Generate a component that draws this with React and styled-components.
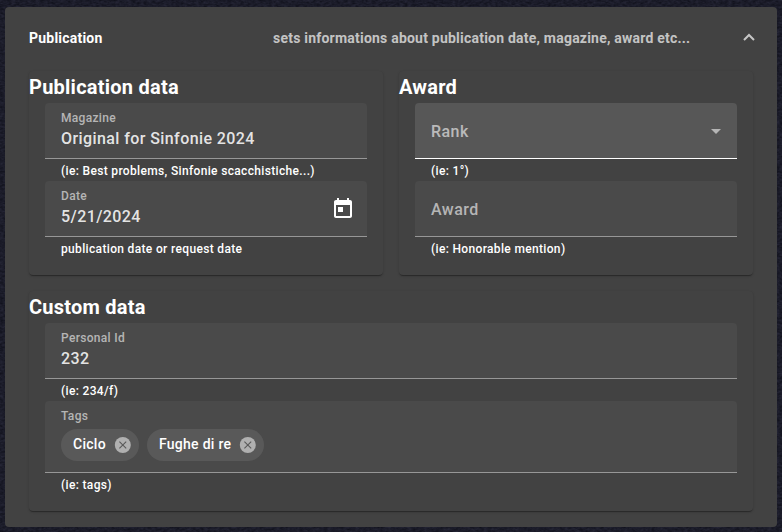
import React from "react";
import styled, { createGlobalStyle } from "styled-components";

const GlobalStyle = createGlobalStyle`
  * { box-sizing: border-box; }
  body {
    margin: 0;
    background: #1b1b29;
    font-family: Roboto, "Liberation Sans", sans-serif;
    font-weight: 500;
    color: #fff;
  }
`;

const Page = styled.main`
  position: relative;
  isolation: isolate;
  height: 532px;
  padding: 7px 5px 5px;
  overflow: hidden;
`;

const Texture = styled.svg`
  position: absolute;
  inset: 0;
  z-index: -1;
  width: 100%;
  height: 100%;
`;

const Panel = styled.section`
  height: 520px;
  padding: 0 24px 16px;
  border-radius: 4px;
  background: #424242;
`;

const PanelHeader = styled.header`
  display: flex;
  align-items: center;
  height: 64px;
  padding-bottom: 2px;
  font-size: 14px;
  line-height: 20px;
  letter-spacing: 0.22px;
`;

const PanelTitle = styled.div`
  width: 244px;
  font-weight: 700;
`;

const PanelDescription = styled.div`
  flex: 1;
  font-weight: 700;
  color: rgba(255, 255, 255, 0.7);
`;

const Chevron = styled.svg`
  width: 12px;
  height: 8px;
  margin: 0 -2px 2px 0;
`;

const Cards = styled.div`
  display: grid;
  grid-template-columns: 1fr 1fr;
  gap: 16px;
`;

const Card = styled.section`
  grid-column: ${(p) => (p.$wide ? "1 / -1" : "auto")};
  padding-bottom: 16px;
  border-radius: 4px;
  background: #424242;
  box-shadow: 0 2px 1px -1px rgba(0, 0, 0, 0.2), 0 1px 1px rgba(0, 0, 0, 0.14),
    0 1px 3px rgba(0, 0, 0, 0.12);
`;

const CardTitle = styled.h2`
  margin: 0;
  height: 32px;
  font-size: 20px;
  font-weight: 700;
  line-height: 32px;
  letter-spacing: 0.24px;
  white-space: nowrap;
`;

const Field = styled.div`
  padding: 0 16px;
`;

const FieldBox = styled.div`
  display: flex;
  align-items: center;
  justify-content: space-between;
  height: ${(p) => (p.$tall ? 72 : 56)}px;
  padding: 0 16px;
  border-bottom: 1px solid ${(p) => (p.$hover ? "#fff" : "#979797")};
  border-radius: 4px 4px 0 0;
  background: ${(p) => (p.$hover ? "#575757" : "#4a4a4a")};
`;

const FieldText = styled.div`
  display: flex;
  flex-direction: column;
`;

const Label = styled.span`
  font-size: 12px;
  line-height: 18px;
  letter-spacing: 0.32px;
  color: rgba(255, 255, 255, 0.6);
`;

const Value = styled.span`
  font-size: 16px;
  line-height: 24px;
  padding-bottom: 2px;
  letter-spacing: 0.41px;
  color: rgba(255, 255, 255, 0.87);
`;

const Placeholder = styled.span`
  padding-top: 2px;
  font-size: 16px;
  line-height: 24px;
  letter-spacing: 0.45px;
  color: rgba(255, 255, 255, 0.6);
`;

const Hint = styled.div`
  height: 22px;
  padding: 2px 16px 0;
  font-size: 12px;
  line-height: 20px;
  letter-spacing: 0.34px;
`;

const SelectArrow = styled.svg`
  width: 10px;
  height: 5px;
  margin-top: 2px;
`;

const CalendarIcon = styled.svg`
  width: 24px;
  height: 24px;
  margin-right: -4px;
`;

const Chips = styled.div`
  display: flex;
  gap: 8px;
  margin: 4px 0 6px;
`;

const Chip = styled.div`
  display: flex;
  align-items: center;
  gap: 8px;
  height: 32px;
  padding: 0 7px 0 12px;
  border-radius: 16px;
  background: #595959;
`;

const ChipLabel = styled.span`
  padding-bottom: 2px;
  font-size: 14px;
  line-height: 20px;
  letter-spacing: 0.28px;
`;

const RemoveIcon = styled.svg`
  width: 18px;
  height: 18px;
`;

function FieldRow({ label, value, placeholder, hint, hover, tall, trailing, children }) {
  return (
    <Field>
      <FieldBox $hover={hover} $tall={tall}>
        <FieldText>
          {label && <Label>{label}</Label>}
          {value && <Value>{value}</Value>}
          {placeholder && <Placeholder>{placeholder}</Placeholder>}
          {children}
        </FieldText>
        {trailing}
      </FieldBox>
      <Hint>{hint}</Hint>
    </Field>
  );
}

function Tag({ name }) {
  return (
    <Chip>
      <ChipLabel>{name}</ChipLabel>
      <RemoveIcon viewBox="0 0 18 18">
        <circle cx="8.8" cy="9" r="8" fill="#b0b0b0" />
        <path d="M5.4 5.6l6.8 6.8M12.2 5.6l-6.8 6.8" stroke="#595959" strokeWidth="1.1" />
      </RemoveIcon>
    </Chip>
  );
}

const Calendar = (
  <CalendarIcon viewBox="0 0 24 24" fill="#fff">
    <path d="M19 3h-1V1h-2v2H8V1H6v2H5c-1.11 0-1.99.9-1.99 2L3 19c0 1.1.89 2 2 2h14c1.1 0 2-.9 2-2V5c0-1.1-.9-2-2-2zm0 16H5V8h14v11zM7 10h5v5H7z" />
  </CalendarIcon>
);

const Arrow = (
  <SelectArrow viewBox="0 0 10 5" fill="#b5b5b5">
    <path d="M0 0h10L5 5z" />
  </SelectArrow>
);

export default function App() {
  return (
    <Page>
      <GlobalStyle />
      <Texture aria-hidden="true">
        <filter id="grain" x="0" y="0" width="100%" height="100%" colorInterpolationFilters="sRGB">
          <feTurbulence type="fractalNoise" baseFrequency="0.25 0.45" numOctaves="3" seed="4" />
          <feColorMatrix values="0.11 0 0 0 0.05  0.11 0 0 0 0.053  0.14 0 0 0 0.09  0 0 0 0 1" />
        </filter>
        <rect width="100%" height="100%" filter="url(#grain)" />
      </Texture>
      <Panel>
        <PanelHeader>
          <PanelTitle>Publication</PanelTitle>
          <PanelDescription>
            sets informations about publication date, magazine, award etc...
          </PanelDescription>
          <Chevron viewBox="0 0 12 8" fill="none" stroke="#c6c6c6" strokeWidth="2">
            <path d="M1 7 6 2l5 5" />
          </Chevron>
        </PanelHeader>
        <Cards>
          <Card>
            <CardTitle>Publication data</CardTitle>
            <FieldRow
              label="Magazine"
              value="Original for Sinfonie 2024"
              hint="(ie: Best problems, Sinfonie scacchistiche...)"
            />
            <FieldRow
              label="Date"
              value="5/21/2024"
              hint="publication date or request date"
              trailing={Calendar}
            />
          </Card>
          <Card>
            <CardTitle>Award</CardTitle>
            <FieldRow placeholder="Rank" hint="(ie: 1°)" hover trailing={Arrow} />
            <FieldRow placeholder="Award" hint="(ie: Honorable mention)" />
          </Card>
          <Card $wide>
            <CardTitle>Custom data</CardTitle>
            <FieldRow label="Personal Id" value="232" hint="(ie: 234/f)" />
            <FieldRow label="Tags" hint="(ie: tags)" tall>
              <Chips>
                <Tag name="Ciclo" />
                <Tag name="Fughe di re" />
              </Chips>
            </FieldRow>
          </Card>
        </Cards>
      </Panel>
    </Page>
  );
}
